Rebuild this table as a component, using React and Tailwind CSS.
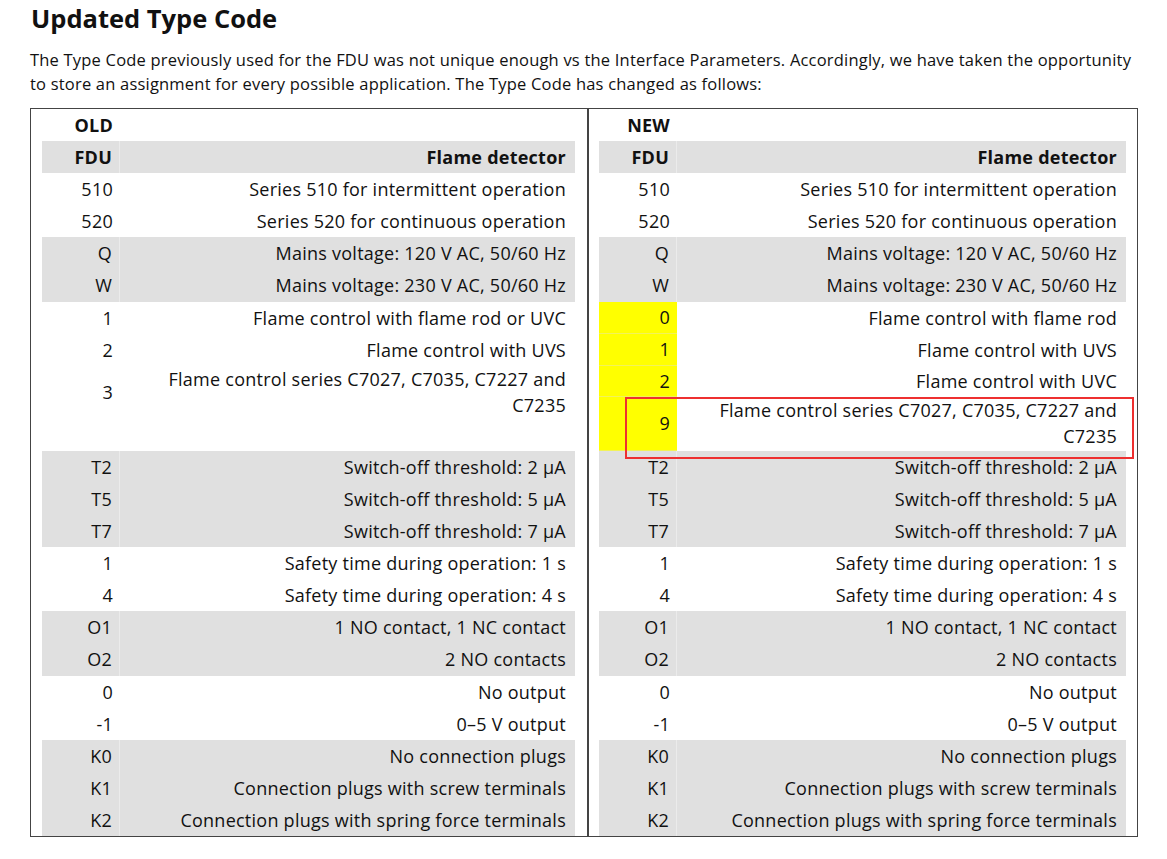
import React from "react";

const oldRows = [
  { code: "510", desc: "Series 510 for intermittent operation" },
  { code: "520", desc: "Series 520 for continuous operation" },
  { code: "Q", desc: "Mains voltage: 120 V AC, 50/60 Hz", gray: true },
  { code: "W", desc: "Mains voltage: 230 V AC, 50/60 Hz", gray: true, h: "h-[33px]" },
  { code: "1", desc: "Flame control with flame rod or UVC" },
  { code: "2", desc: "Flame control with UVS" },
  { code: "3", desc: ["Flame control series C7027, C7035, C7227 and", "C7235"], h: "h-[85px]" },
];

const newRows = [
  { code: "510", desc: "Series 510 for intermittent operation" },
  { code: "520", desc: "Series 520 for continuous operation" },
  { code: "Q", desc: "Mains voltage: 120 V AC, 50/60 Hz", gray: true },
  { code: "W", desc: "Mains voltage: 230 V AC, 50/60 Hz", gray: true, h: "h-[33px]" },
  { code: "0", desc: "Flame control with flame rod", yellow: true },
  { code: "1", desc: "Flame control with UVS", yellow: true },
  { code: "2", desc: "Flame control with UVC", yellow: true, h: "h-[31px]" },
  { code: "9", desc: ["Flame control series C7027, C7035, C7227 and", "C7235"], yellow: true, h: "h-[54px]" },
];

const commonRows = [
  { code: "T2", desc: "Switch-off threshold: 2 µA", gray: true },
  { code: "T5", desc: "Switch-off threshold: 5 µA", gray: true },
  { code: "T7", desc: "Switch-off threshold: 7 µA", gray: true },
  { code: "1", desc: "Safety time during operation: 1 s" },
  { code: "4", desc: "Safety time during operation: 4 s" },
  { code: "O1", desc: "1 NO contact, 1 NC contact", gray: true },
  { code: "O2", desc: "2 NO contacts", gray: true, h: "h-[33px]" },
  { code: "0", desc: "No output" },
  { code: "-1", desc: "0–5 V output" },
  { code: "K0", desc: "No connection plugs", gray: true },
  { code: "K1", desc: "Connection plugs with screw terminals", gray: true },
  { code: "K2", desc: "Connection plugs with spring force terminals", gray: true },
];

const Row = ({ row }) => {
  const multi = Array.isArray(row.desc);
  return (
    <div className={`flex ${row.h || "h-[32px]"} ${row.gray ? "bg-[#e0e0e0]" : ""}`}>
      <div
        className={`w-[78px] shrink-0 flex justify-end pr-[7px] ${multi ? "items-start" : "items-center"} ${
          row.yellow ? "bg-[#ffff00] border-b border-[#f2f25a]" : row.gray ? "border-r border-[#ebebeb]" : ""
        }`}
      >
        <span className={multi ? "h-[52px] flex items-center" : ""}>{row.code}</span>
      </div>
      <div className={`flex-1 flex flex-col pr-[9px] text-right ${multi ? "justify-start" : "justify-center"}`}>
        {multi ? row.desc.map((l) => <div key={l} className="leading-[26px]">{l}</div>) : row.desc}
      </div>
    </div>
  );
};

const Half = ({ label, rows, className, children }) => (
  <div className={`relative ${className}`}>
    <div className="flex h-[32px] items-center">
      <div className="w-[78px] text-right pr-[7px] font-bold">{label}</div>
    </div>
    <div className="flex h-[32px] bg-[#e0e0e0] font-bold">
      <div className="w-[78px] shrink-0 flex items-center justify-end pr-[7px] border-r border-[#ebebeb]">FDU</div>
      <div className="flex-1 flex items-center justify-end pr-[9px]">Flame detector</div>
    </div>
    {rows.map((r, i) => (
      <Row key={"a" + i} row={r} />
    ))}
    {commonRows.map((r, i) => (
      <Row key={"b" + i} row={r} />
    ))}
    {children}
  </div>
);

export default function App() {
  return (
    <div className="w-[1167px] h-[859px] bg-white text-[#111] font-['Open_Sans',sans-serif] overflow-hidden">
      <div className="pl-[30px] pt-[2px]">
        <h1 className="text-[25.5px] leading-[32px] font-bold pl-[1px]">Updated Type Code</h1>
        <p className="mt-[14px] text-[16.5px] leading-[24px] tracking-[0.2px] whitespace-nowrap">
          The Type Code previously used for the FDU was not unique enough vs the Interface Parameters. Accordingly, we have taken the opportunity
          <br />
          to store an assignment for every possible application. The Type Code has changed as follows:
        </p>
        <div className="mt-[12px] w-[1108px] flex border border-[#444] text-[18px] tracking-[0.25px] whitespace-nowrap">
          <Half label="OLD" rows={oldRows} className="w-[558px] pl-[11px] pr-[12px] border-r-2 border-[#444]" />
          <Half label="NEW" rows={newRows} className="flex-1 pl-[10px] pr-[11px]">
            <div className="absolute left-[36px] top-[288px] w-[509px] h-[62px] border-2 border-[#ee3030]" />
          </Half>
        </div>
      </div>
    </div>
  );
}
